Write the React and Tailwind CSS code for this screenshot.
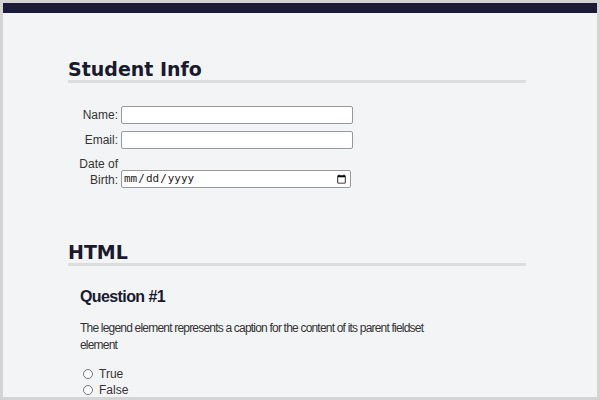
export default function App() {
  return (
    <div className="w-[600px] h-[400px] bg-[#d4d4d4] p-[3px] overflow-hidden">
      <div className="w-full h-full bg-[#f3f4f6] flex flex-col overflow-hidden">
        <div className="h-[10px] bg-[#1c1c38] shrink-0" />
        <div className="pl-[65px] pr-[71px] flex flex-col" style={{ fontFamily: '"Liberation Sans", Arial, sans-serif' }}>
          <h2 className="mt-[45px] text-[19px] leading-[22px] font-bold text-[#1a1a2e] border-b-[3px] border-[#dcdde1]" style={{ fontFamily: '"DejaVu Sans", Verdana, sans-serif' }}>
            Student Info
          </h2>
          <div className="mt-[23px] flex flex-col gap-[7px] text-[12px] text-[#333]">
            <div className="flex items-center">
              <label className="w-[53px] text-right pr-[3px]">Name:</label>
              <input type="text" className="w-[232px] h-[18px] border border-[#999] rounded-[2px] bg-white" />
            </div>
            <div className="flex items-center">
              <label className="w-[53px] text-right pr-[3px]">Email:</label>
              <input type="text" className="w-[232px] h-[18px] border border-[#999] rounded-[2px] bg-white" />
            </div>
            <div className="flex items-end">
              <label className="w-[53px] text-right pr-[3px] leading-[16px]">Date of Birth:</label>
              <input type="date" className="w-[230px] h-[18px] border border-[#999] rounded-[2px] bg-white text-[11px] px-[1px] text-[#222]" style={{ fontFamily: '"DejaVu Sans Mono", monospace' }} />
            </div>
          </div>
          <h2 className="mt-[53px] text-[19px] leading-[22px] font-bold text-[#1a1a2e] border-b-[3px] border-[#dcdde1]" style={{ fontFamily: '"DejaVu Sans", Verdana, sans-serif' }}>
            HTML
          </h2>
          <div className="pl-[12px]">
            <h3 className="mt-[22px] text-[16px] leading-[18px] font-bold text-[#1a1a2e] tracking-[-0.6px]">Question #1</h3>
            <p className="mt-[14px] text-[12px] leading-[17px] text-[#333] tracking-[-0.8px] w-[360px]">
              The legend element represents a caption for the content of its parent fieldset element
            </p>
            <div className="mt-[12px] flex flex-col text-[12px] text-[#333] leading-[16px]">
              <label className="flex items-center gap-[6px] pl-[3px]">
                <span className="w-[10px] h-[10px] rounded-full border border-[#777] bg-white" />
                True
              </label>
              <label className="flex items-center gap-[6px] pl-[3px]">
                <span className="w-[10px] h-[10px] rounded-full border border-[#777] bg-white" />
                False
              </label>
            </div>
          </div>
        </div>
      </div>
    </div>
  );
}
